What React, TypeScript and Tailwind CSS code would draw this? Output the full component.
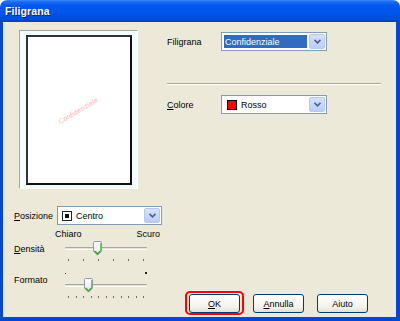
import React from "react";

function ComboButton() {
  return (
    <div className="w-[16px] self-stretch my-[1px] mr-[1px] rounded-[2px] border border-[#B4C8F6] bg-[linear-gradient(to_bottom,#D6E2FE,#B9CDF9)] flex items-center justify-center">
      <svg width="7" height="5" viewBox="0 0 7 5">
        <path d="M0.5 0.8 L3.5 3.8 L6.5 0.8" fill="none" stroke="#4D6185" strokeWidth="1.6" />
      </svg>
    </div>
  );
}

function Thumb() {
  return (
    <svg width="9" height="15" viewBox="0 0 9 15" className="block">
      <defs>
        <linearGradient id="tg" x1="0" x2="0" y1="0" y2="1">
          <stop offset="0" stopColor="#FFFFFF" />
          <stop offset="1" stopColor="#E7E6E0" />
        </linearGradient>
      </defs>
      <path d="M1.5 0.5 H7.5 Q8.5 0.5 8.5 1.5 V10 L4.5 14.2 L0.5 10 V1.5 Q0.5 0.5 1.5 0.5 Z" fill="url(#tg)" stroke="#8C9BA8" strokeWidth="1" />
      <path d="M1.5 10 L4.5 13 L7.5 10" fill="none" stroke="#21A121" strokeWidth="1.2" />
      <path d="M7.6 2 V10" stroke="#5FC05F" strokeWidth="1" />
    </svg>
  );
}

function Slider({ ticks, pos }: { ticks: number; pos: number }) {
  const items = Array.from({ length: ticks });
  return (
    <div className="w-[86px] flex flex-col">
      <div className="relative h-[16px] flex items-center px-[2px]">
        <div className="w-full h-[3px] rounded-[1px] border-t border-[#A7A6A0] border-b border-b-white bg-[#E4E1D4]" />
        <div className="absolute top-[1px]" style={{ left: pos }}>
          <Thumb />
        </div>
      </div>
      <div className="mt-[3px] h-[3px] flex justify-between px-[5px]">
        {items.map((_, i) => (
          <span key={i} className="w-[1px] h-[2px] bg-[#6E6D68]" />
        ))}
      </div>
    </div>
  );
}

function Button({ label, u }: { label: string; u: number }) {
  return (
    <div className="w-[51px] h-[19px] rounded-[3px] border border-[#003C74] bg-[linear-gradient(to_bottom,#FFFFFF,#F3F2EC_70%,#E3E0D3)] flex items-center justify-center text-black">
      <span>
        {label.split("").map((c, i) => (
          <span key={i} className={i === u ? "underline" : ""}>
            {c}
          </span>
        ))}
      </span>
    </div>
  );
}

export default function App() {
  return (
    <div className="w-[400px] h-[321px] flex flex-col font-['Liberation_Sans',Arial,sans-serif] text-[9px] text-black leading-[10px]">
      <div className="h-[22px] rounded-t-[7px] bg-[linear-gradient(to_bottom,#3A8CF6_0%,#1B6CF2_8%,#0058EE_25%,#0055EA_60%,#0049D9_90%,#003DC2_100%)] flex items-center pl-[5px]">
        <span className="text-white font-bold text-[10.5px] [text-shadow:1px_1px_0_#0A1E6E] tracking-[0.1px]">Filigrana</span>
      </div>
      <div className="flex-1 bg-[#ECE9D8] border-l-[3px] border-r-[4px] border-b-[4px] border-[#0545D8] flex flex-col">
        <div className="flex pt-[8px]">
          <div className="ml-[16px] w-[119px] h-[159px] border border-t-[#A6A59E] border-l-[#A6A59E] border-r-white border-b-white bg-[#F3FDFF] pt-[4px] pl-[6px]">
            <div className="w-[106px] h-[150px] border-2 border-t-[#333] border-l-[#333] border-r-[#111] border-b-[#111] bg-white flex items-center justify-center">
              <span className="text-[7px] text-[#FFB0B0] rotate-[-31deg] tracking-[0.2px] translate-y-[1px]">Confidenziale</span>
            </div>
          </div>
          <div className="ml-[29px] w-[214px] flex flex-col">
            <div className="mt-[2px] flex items-center h-[19px]">
              <span className="w-[54px]">Filigrana</span>
              <div className="w-[106px] h-[19px] border border-[#7F9DB9] bg-white flex">
                <div className="flex-1 my-[2px] ml-[2px] mr-[2px] bg-[#316AC5] text-white flex items-center pl-[1px]">
                  Confidenziale
                </div>
                <ComboButton />
              </div>
            </div>
            <div className="mt-[32px] h-[2px] border-t border-[#ACA899] border-b border-b-white" />
            <div className="mt-[10px] flex items-center h-[19px]">
              <span className="w-[54px]">
                <span className="underline">C</span>olore
              </span>
              <div className="w-[106px] h-[19px] border border-[#7F9DB9] bg-white flex">
                <div className="flex-1 flex items-center pl-[5px] gap-[4px]">
                  <span className="w-[10px] h-[10px] bg-[#FF0000] border border-black" />
                  <span>Rosso</span>
                </div>
                <ComboButton />
              </div>
            </div>
          </div>
        </div>
        <div className="flex-1 flex">
          <div className="pl-[11px] pt-[17px] flex flex-col">
            <div className="flex items-center h-[19px]">
              <span className="w-[43px]">
                <span className="underline">P</span>osizione
              </span>
              <div className="w-[105px] h-[19px] border border-[#7F9DB9] bg-white flex">
                <div className="flex-1 flex items-center pl-[4px] gap-[4px]">
                  <span className="w-[10px] h-[10px] border border-[#222] bg-white flex items-center justify-center">
                    <span className="w-[4px] h-[4px] bg-[#111]" />
                  </span>
                  <span>Centro</span>
                </div>
                <ComboButton />
              </div>
            </div>
            <div className="mt-[4px] ml-[41px] w-[105px] flex justify-between">
              <span>Chiaro</span>
              <span>Scuro</span>
            </div>
            <div className="mt-[1px] flex items-start">
              <span className="w-[49px] mt-[4px]">
                <span className="underline">D</span>ensità
              </span>
              <Slider ticks={6} pos={30} />
            </div>
            <div className="mt-[8px] flex items-start">
              <span className="w-[49px] mt-[5px]">Formato</span>
              <div className="flex flex-col">
                <div className="h-[6px] w-[86px] flex justify-between items-center px-[2px]">
                  <span className="w-[1px] h-[1px] bg-[#333]" />
                  <span className="w-[2px] h-[2px] bg-[#222]" />
                </div>
                <div className="mt-[1px]">
                  <Slider ticks={11} pos={21} />
                </div>
              </div>
            </div>
          </div>
          <div className="ml-auto mr-[28px] self-end mb-[4px] flex gap-[13px]">
            <div className="relative">
              <Button label="OK" u={0} />
              <div className="absolute -left-[4px] -right-[4px] -top-[3px] -bottom-[2px] border-2 border-[#FF0000] rounded-[5px]" />
            </div>
            <Button label="Annulla" u={0} />
            <Button label="Aiuto" u={-1} />
          </div>
        </div>
      </div>
    </div>
  );
}
